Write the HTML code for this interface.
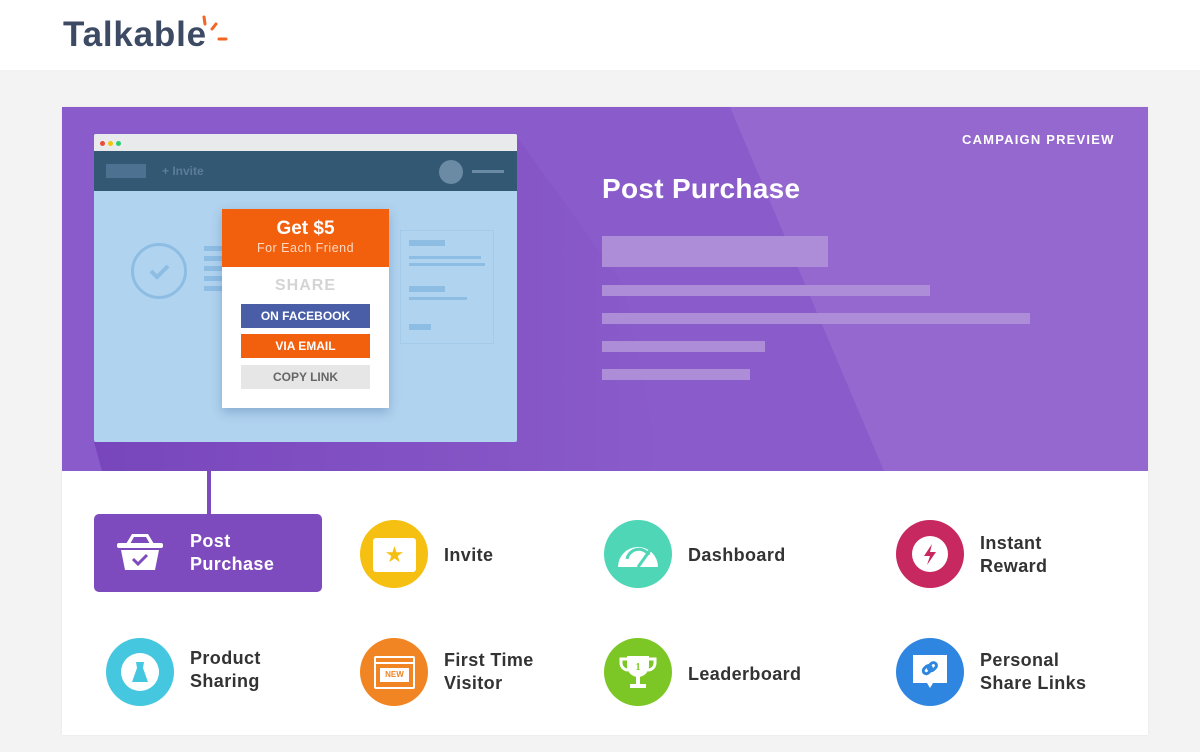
<!DOCTYPE html>
<html><head><style>
*{margin:0;padding:0;box-sizing:border-box}
body{width:1200px;height:752px;background:#f3f3f3;font-family:"Liberation Sans",sans-serif;position:relative;overflow:hidden}
.a{position:absolute}
.hdr{left:0;top:0;width:1200px;height:70px;background:#fff}
.card{left:62px;top:107px;width:1086px;height:628px;background:#fff;box-shadow:0 0 2px rgba(0,0,0,.06)}
.hero{left:62px;top:107px;width:1086px;height:364px;background:#8a5bca;overflow:hidden}
.bar{background:#ad8cd8}
.lbl{font-weight:bold;color:#333;font-size:18px;line-height:23px;letter-spacing:0.4px}
.ic{width:68px;height:68px;border-radius:50%}
</style></head><body>
<div class="a hdr"></div>
<div class="a" style="left:63px;top:15px;font-size:35px;font-weight:bold;color:#3d4a63;letter-spacing:0.8px">Talkable</div>
<svg class="a" style="left:196px;top:14px" width="34" height="34"><g stroke="#f26522" stroke-width="3" stroke-linecap="round"><line x1="8" y1="3" x2="9" y2="10"/><line x1="20" y1="10" x2="16" y2="15"/><line x1="23" y1="25" x2="30" y2="25"/></g></svg>
<div class="a card"></div>
<div class="a hero">
 <svg class="a" style="left:0;top:0" width="1086" height="364">
  <defs><linearGradient id="g" x1="0" x2="1" y1="0" y2="0"><stop offset="0" stop-color="#6a35b0" stop-opacity=".55"/><stop offset="1" stop-color="#6a35b0" stop-opacity="0"/></linearGradient></defs>
  <polygon points="668,0 1086,0 1086,364 822,364" fill="#9568d0"/>
  <polygon points="455,30 560,175 600,364 40,364 32,335 455,335" fill="url(#g)"/>
 </svg>
</div>
<div class="a" style="left:962px;top:132px;color:#fff;font-size:13px;font-weight:bold;letter-spacing:1.2px">CAMPAIGN PREVIEW</div>
<div class="a" style="left:602px;top:173px;color:#fff;font-size:28px;font-weight:bold;letter-spacing:0.3px">Post Purchase</div>
<div class="a bar" style="left:602px;top:236px;width:226px;height:31px"></div>
<div class="a bar" style="left:602px;top:285px;width:328px;height:11px"></div>
<div class="a bar" style="left:602px;top:313px;width:428px;height:11px"></div>
<div class="a bar" style="left:602px;top:341px;width:163px;height:11px"></div>
<div class="a bar" style="left:602px;top:369px;width:148px;height:11px"></div>
<!-- browser -->
<div class="a" style="left:94px;top:134px;width:423px;height:308px;background:#b0d3ef;border-radius:2px;overflow:hidden">
 <div class="a" style="left:0;top:0;width:423px;height:17px;background:#e9eaec"></div>
 <div class="a" style="left:6px;top:7px;width:5px;height:5px;border-radius:50%;background:#e74c3c"></div>
 <div class="a" style="left:14px;top:7px;width:5px;height:5px;border-radius:50%;background:#f1c40f"></div>
 <div class="a" style="left:22px;top:7px;width:5px;height:5px;border-radius:50%;background:#2ecc71"></div>
 <div class="a" style="left:0;top:17px;width:423px;height:40px;background:#335874"></div>
 <div class="a" style="left:12px;top:30px;width:40px;height:14px;background:#4d7190"></div>
 <div class="a" style="left:68px;top:30px;color:#5b7d98;font-size:12px;font-weight:bold">+ Invite</div>
 <div class="a" style="left:345px;top:26px;width:24px;height:24px;border-radius:50%;background:#6b8aa3"></div>
 <div class="a" style="left:378px;top:36px;width:32px;height:3px;background:#6b8aa3"></div>
 <div class="a" style="left:37px;top:109px;width:56px;height:56px;border-radius:50%;border:3px solid #8ebde3"></div>
 <svg class="a" style="left:37px;top:109px" width="56" height="56"><path d="M20 28l6 6 11-11" stroke="#8ebde3" stroke-width="4" fill="none"/></svg>
 <div class="a" style="left:110px;top:112px;width:20px;height:45px;background:repeating-linear-gradient(#8ebde3 0 5px,transparent 5px 10px)"></div>
 <div class="a" style="left:306px;top:96px;width:94px;height:114px;border:1px solid #a5cbeb"></div>
 <div class="a" style="left:315px;top:106px;width:36px;height:6px;background:#8ebde3"></div>
 <div class="a" style="left:315px;top:122px;width:72px;height:3px;background:#8ebde3"></div>
 <div class="a" style="left:315px;top:129px;width:76px;height:3px;background:#8ebde3"></div>
 <div class="a" style="left:315px;top:152px;width:36px;height:6px;background:#8ebde3"></div>
 <div class="a" style="left:315px;top:163px;width:58px;height:3px;background:#8ebde3"></div>
 <div class="a" style="left:315px;top:190px;width:22px;height:6px;background:#8ebde3"></div>
</div>
<!-- popup -->
<div class="a" style="left:222px;top:209px;width:167px;height:199px;background:#fff;box-shadow:0 4px 10px rgba(40,80,140,.3)">
 <div style="height:58px;background:#f25f0d;color:#fff;text-align:center;padding-top:10px">
  <div style="font-size:19px;font-weight:bold;line-height:20px">Get $5</div>
  <div style="font-size:12.5px;line-height:18px;color:#ffd9c2;letter-spacing:0.5px">For Each Friend</div>
 </div>
 <div style="text-align:center;color:#d4d4d4;font-size:16px;font-weight:bold;margin-top:10px;letter-spacing:1px">SHARE</div>
 <div class="a" style="left:19px;top:95px;width:129px;height:24px;background:#4a5ea8;color:#fff;font-size:12px;font-weight:bold;text-align:center;line-height:24px">ON FACEBOOK</div>
 <div class="a" style="left:19px;top:125px;width:129px;height:24px;background:#f25f0d;color:#fff;font-size:12px;font-weight:bold;text-align:center;line-height:24px">VIA EMAIL</div>
 <div class="a" style="left:19px;top:156px;width:129px;height:24px;background:#e6e6e6;color:#666;font-size:12px;font-weight:bold;text-align:center;line-height:24px">COPY LINK</div>
</div>
<!-- connector -->
<div class="a" style="left:207px;top:471px;width:4px;height:44px;background:#7d4bbd"></div>
<div class="a" style="left:94px;top:514px;width:228px;height:78px;background:#7d4bbd;border-radius:5px"></div>
<svg class="a" style="left:116px;top:530px" width="48" height="44" fill="#fff"><path d="M16 4l-6 10h4l4-7h12l4 7h4l-6-10z"/><rect x="1" y="13" width="46" height="5" rx="2"/><path d="M5 20h38l-4 20H9z"/><path d="M17 29l5 5 9-9" stroke="#7d4bbd" stroke-width="3" fill="none"/></svg>
<div class="a lbl" style="left:190px;top:530px;color:#fff">Post<br>Purchase</div>
<!-- icons row 1 -->
<div class="a ic" style="left:360px;top:520px;background:#f5c012"></div>
<div class="a" style="left:373px;top:538px;width:43px;height:34px;background:#fff;border-radius:3px;color:#f5c012;font-size:22px;text-align:center;line-height:34px">★</div>
<div class="a lbl" style="left:444px;top:544px">Invite</div>
<div class="a ic" style="left:604px;top:520px;background:#4fd6b6"></div>
<svg class="a" style="left:615px;top:537px" width="46" height="32"><path d="M3 30 A20 20 0 0 1 43 30z" fill="#fff"/><path d="M12 22 A12 12 0 0 1 34 18" stroke="#4fd6b6" stroke-width="3" fill="none"/><path d="M23 30 L36 12" stroke="#4fd6b6" stroke-width="3"/></svg>
<div class="a lbl" style="left:688px;top:544px">Dashboard</div>
<div class="a ic" style="left:896px;top:520px;background:#c6285f"></div>
<div class="a" style="left:912px;top:536px;width:36px;height:36px;border-radius:50%;background:#fff"></div>
<svg class="a" style="left:912px;top:536px" width="36" height="36"><path d="M20 8 L12 20 H18 L15 29 L24 16 H18 Z" fill="#c6285f"/></svg>
<div class="a lbl" style="left:980px;top:532px">Instant<br>Reward</div>
<!-- row 2 -->
<div class="a ic" style="left:106px;top:638px;background:#45c7e0"></div>
<div class="a" style="left:121px;top:653px;width:38px;height:38px;border-radius:50%;background:#fff"></div>
<svg class="a" style="left:121px;top:653px" width="38" height="38"><path d="M15 9h8l-1 6 5 14H11l5-14z" fill="#45c7e0"/></svg>
<div class="a lbl" style="left:190px;top:647px">Product<br>Sharing</div>
<div class="a ic" style="left:360px;top:638px;background:#f28523"></div>
<div class="a" style="left:374px;top:656px;width:41px;height:33px;border:2px solid #fff;border-radius:2px"></div>
<div class="a" style="left:374px;top:662px;width:41px;height:2px;background:#fff"></div>
<div class="a" style="left:380px;top:668px;width:29px;height:14px;background:#fff;color:#f28523;font-size:8px;font-weight:bold;text-align:center;line-height:14px">NEW</div>
<div class="a lbl" style="left:444px;top:649px">First Time<br>Visitor</div>
<div class="a ic" style="left:604px;top:638px;background:#7cc726"></div>
<svg class="a" style="left:618px;top:650px" width="40" height="44" fill="#fff"><path d="M9 6h22v10a11 11 0 0 1-22 0z"/><path d="M9 9H3v4a7 7 0 0 0 7 7M31 9h6v4a7 7 0 0 1-7 7" stroke="#fff" stroke-width="3" fill="none"/><rect x="18" y="26" width="4" height="8"/><rect x="12" y="34" width="16" height="4"/><text x="20" y="20" font-size="10" font-weight="bold" fill="#7cc726" text-anchor="middle" font-family="Liberation Serif">1</text></svg>
<div class="a lbl" style="left:688px;top:663px">Leaderboard</div>
<div class="a ic" style="left:896px;top:638px;background:#2f86e0"></div>
<svg class="a" style="left:910px;top:652px" width="40" height="40"><path d="M3 3h34v28H23l-3 5-3-5H3z" fill="#fff"/><g stroke="#2f86e0" stroke-width="3" fill="none"><rect x="13" y="15" width="9" height="6" rx="3" transform="rotate(-45 17 18)"/><rect x="18" y="12" width="9" height="6" rx="3" transform="rotate(-45 22 15)"/></g></svg>
<div class="a lbl" style="left:980px;top:649px">Personal<br>Share Links</div>
</body></html>
